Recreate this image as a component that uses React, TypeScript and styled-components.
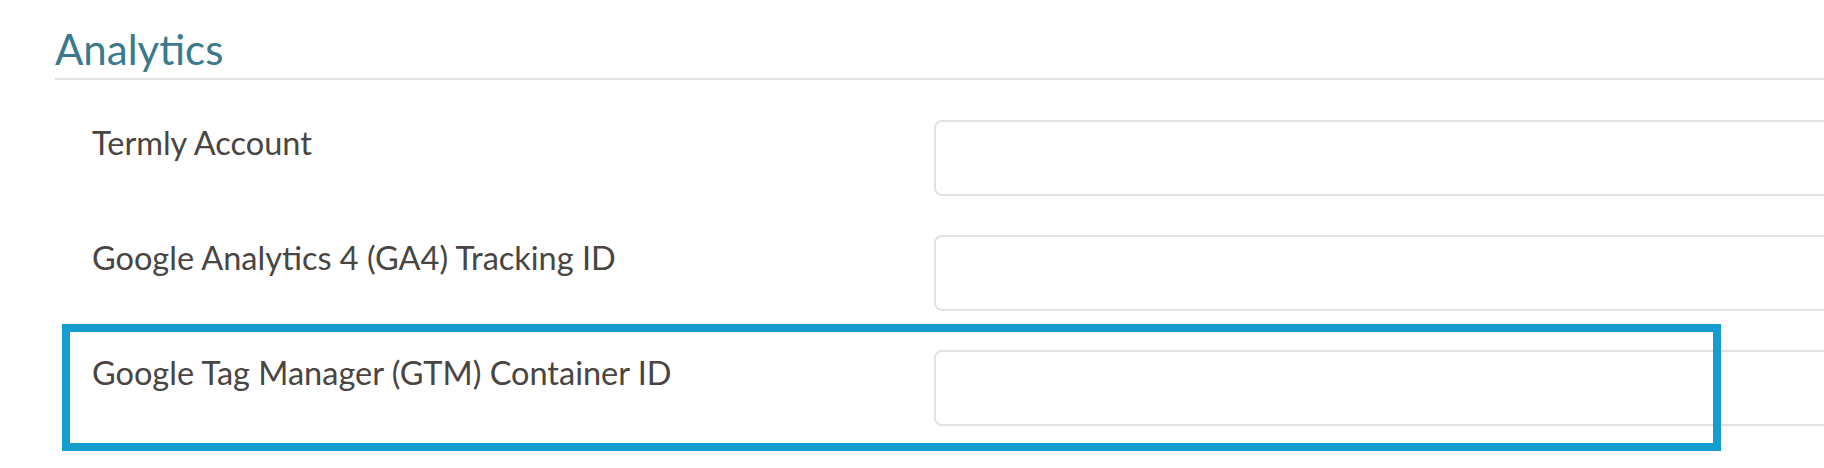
import styled, { createGlobalStyle } from "styled-components";

const GlobalStyle = createGlobalStyle`
  html {
    overflow: hidden;
  }
  html, body {
    margin: 0;
    padding: 0;
    background: #ffffff;
  }
  body {
    font-family: Lato, "Open Sans", "Liberation Sans", sans-serif;
  }
`;

const Page = styled.div`
  box-sizing: border-box;
  min-height: 468px;
  padding: 24px 0 41px 55px;
  width: 1824px;
  overflow: hidden;
`;

const SectionTitle = styled.h2`
  margin: 0;
  padding-bottom: 4px;
  font-size: 42px;
  line-height: 1.2;
  font-weight: 400;
  color: #3a7a8c;
  border-bottom: 2px solid #e3e3e3;
`;

const Fields = styled.div`
  display: flex;
  flex-direction: column;
  gap: 39px;
  padding-top: 40px;
`;

const Row = styled.div`
  position: relative;
  display: grid;
  grid-template-columns: 842px 1fr;
  padding-left: 37px;
`;

const Label = styled.label`
  padding-top: 3px;
  font-size: 32.5px;
  line-height: 1.2;
  color: #484542;
`;

const Input = styled.input`
  box-sizing: border-box;
  width: 1000px;
  height: 76px;
  border: 2px solid #dfe2e6;
  border-radius: 8px;
  background: #ffffff;
  font: inherit;
  outline: none;
`;

/* annotation frame drawn over the highlighted row */
const Highlight = styled.div`
  position: absolute;
  top: -26px;
  bottom: -25px;
  left: 7px;
  width: 1659px;
  box-sizing: border-box;
  border: 8px solid #159dcf;
  pointer-events: none;
`;

const fields = [
  { id: "termly", label: "Termly Account" },
  { id: "ga4", label: "Google Analytics 4 (GA4) Tracking ID" },
  { id: "gtm", label: "Google Tag Manager (GTM) Container ID", highlighted: true },
];

export default function App() {
  return (
    <>
      <GlobalStyle />
      <Page>
        <SectionTitle>Analytics</SectionTitle>
        <Fields>
          {fields.map((f) => (
            <Row key={f.id}>
              <Label htmlFor={f.id}>{f.label}</Label>
              <Input id={f.id} type="text" />
              {f.highlighted && <Highlight />}
            </Row>
          ))}
        </Fields>
      </Page>
    </>
  );
}
